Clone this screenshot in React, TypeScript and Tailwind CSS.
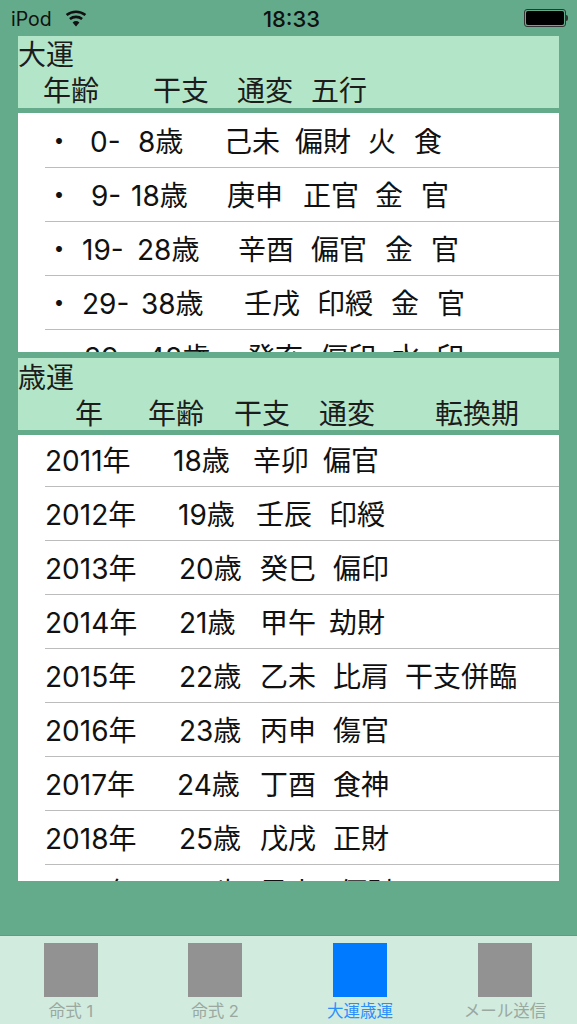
type Cell = { t: string; w: string };

const FONT = "font-['Inter','Noto_Sans_CJK_JP',sans-serif]";

const LUCK_ROWS: Cell[][] = [
  [{ t: '・', w: 'w-[45px]' }, { t: '0-', w: 'w-[48px]' }, { t: '8歳', w: 'w-[86px]' }, { t: '己未', w: 'w-[71px]' }, { t: '偏財', w: 'w-[73px]' }, { t: '火', w: 'w-[46px]' }, { t: '食', w: 'w-[40px]' }],
  [{ t: '・', w: 'w-[46px]' }, { t: '9-', w: 'w-[40px]' }, { t: '18歳', w: 'w-[96px]' }, { t: '庚申', w: 'w-[76px]' }, { t: '正官', w: 'w-[72px]' }, { t: '金', w: 'w-[46px]' }, { t: '官', w: 'w-[40px]' }],
  [{ t: '・', w: 'w-[37px]' }, { t: '19-', w: 'w-[55px]' }, { t: '28歳', w: 'w-[101px]' }, { t: '辛酉', w: 'w-[73px]' }, { t: '偏官', w: 'w-[74px]' }, { t: '金', w: 'w-[46px]' }, { t: '官', w: 'w-[40px]' }],
  [{ t: '・', w: 'w-[37px]' }, { t: '29-', w: 'w-[59px]' }, { t: '38歳', w: 'w-[103px]' }, { t: '壬戌', w: 'w-[73px]' }, { t: '印綬', w: 'w-[74px]' }, { t: '金', w: 'w-[46px]' }, { t: '官', w: 'w-[40px]' }],
  [{ t: '・', w: 'w-[39px]' }, { t: '39-', w: 'w-[63px]' }, { t: '48歳', w: 'w-[100px]' }, { t: '癸亥', w: 'w-[73px]' }, { t: '偏印', w: 'w-[72px]' }, { t: '水', w: 'w-[44px]' }, { t: '印', w: 'w-[40px]' }],
];

const YEAR_ROWS: Cell[][] = [
  [{ t: '2011年', w: 'w-[128px]' }, { t: '18歳', w: 'w-[80px]' }, { t: '辛卯', w: 'w-[70px]' }, { t: '偏官', w: 'w-[60px]' }],
  [{ t: '2012年', w: 'w-[133px]' }, { t: '19歳', w: 'w-[78px]' }, { t: '壬辰', w: 'w-[73px]' }, { t: '印綬', w: 'w-[60px]' }],
  [{ t: '2013年', w: 'w-[134px]' }, { t: '20歳', w: 'w-[81px]' }, { t: '癸巳', w: 'w-[73px]' }, { t: '偏印', w: 'w-[60px]' }],
  [{ t: '2014年', w: 'w-[134px]' }, { t: '21歳', w: 'w-[81px]' }, { t: '甲午', w: 'w-[69px]' }, { t: '劫財', w: 'w-[60px]' }],
  [{ t: '2015年', w: 'w-[134px]' }, { t: '22歳', w: 'w-[81px]' }, { t: '乙未', w: 'w-[73px]' }, { t: '比肩', w: 'w-[72px]' }, { t: '干支併臨', w: 'w-[115px]' }],
  [{ t: '2016年', w: 'w-[134px]' }, { t: '23歳', w: 'w-[81px]' }, { t: '丙申', w: 'w-[73px]' }, { t: '傷官', w: 'w-[60px]' }],
  [{ t: '2017年', w: 'w-[132px]' }, { t: '24歳', w: 'w-[83px]' }, { t: '丁酉', w: 'w-[73px]' }, { t: '食神', w: 'w-[60px]' }],
  [{ t: '2018年', w: 'w-[134px]' }, { t: '25歳', w: 'w-[81px]' }, { t: '戊戌', w: 'w-[73px]' }, { t: '正財', w: 'w-[60px]' }],
  [{ t: '2019年', w: 'w-[134px]' }, { t: '26歳', w: 'w-[81px]' }, { t: '己亥', w: 'w-[79px]' }, { t: '偏財', w: 'w-[60px]' }],
];

const TABS = [
  { label: '命式 1', box: 'bg-[#929292]', text: 'text-[#9aa8a0]', slot: 'w-[188px] pl-[44px]' },
  { label: '命式 2', box: 'bg-[#929292]', text: 'text-[#9aa8a0]', slot: 'w-[145px]' },
  { label: '大運歳運', box: 'bg-[#007aff]', text: 'text-[#2b8ffb]', slot: 'w-[145px]' },
  { label: 'メール送信', box: 'bg-[#929292]', text: 'text-[#9aa8a0]', slot: 'w-[99px]' },
];

function Row({ cells }: { cells: Cell[] }) {
  return (
    <div className="h-[54px] shrink-0 pl-[27px]">
      <div className="h-[53px] pt-[3px] flex items-center text-[28px] leading-[36px] text-[#111] whitespace-nowrap">
        {cells.map((c, i) => (
          <span key={i} className={`${c.w} shrink-0`}>{c.t}</span>
        ))}
      </div>
      <div className="h-px bg-[#bcbcbc]" />
    </div>
  );
}

function SectionHeader({ title, cols, pad }: { title: string; cols: Cell[]; pad: string }) {
  return (
    <div className={`h-[72px] mx-[18px] bg-[#b3e6c8] text-[28px] leading-[36px] text-[#1c1c1c] whitespace-nowrap ${pad}`}>
      <div>{title}</div>
      <div className="flex">
        {cols.map((c, i) => (
          <span key={i} className={`${c.w} shrink-0`}>{c.t}</span>
        ))}
      </div>
    </div>
  );
}

function WifiIcon() {
  return (
    <svg width="22" height="18" viewBox="0 0 22 18" className="text-[#111]">
      <path d="M11 17.5 L7.6 13.4 A5.4 5.4 0 0 1 14.4 13.4 Z" fill="currentColor" />
      <path d="M4.9 10.1 A9.6 9.6 0 0 1 17.1 10.1" fill="none" stroke="currentColor" strokeWidth="2.6" />
      <path d="M1.6 6.1 A14.8 14.8 0 0 1 20.4 6.1" fill="none" stroke="currentColor" strokeWidth="2.6" />
    </svg>
  );
}

export default function App() {
  return (
    <div className={`relative w-[577px] h-[1024px] bg-[#64ab8c] overflow-hidden flex flex-col ${FONT}`}>
      <div className="h-[36px] shrink-0 flex items-center pl-[11px] pr-[9px] text-[#111] text-[19.5px]">
        <span className="w-[54px] pt-[3px]">iPod</span>
        <WifiIcon />
        <div className="ml-auto flex items-center">
          <div className="w-[42px] h-[18px] rounded-[3px] border border-[#333] p-[1px]">
            <div className="w-full h-full rounded-[2px] bg-black" />
          </div>
          <div className="w-[2px] h-[6px] bg-[#333] rounded-r-sm" />
        </div>
      </div>
      <span className="absolute top-[6px] left-[3px] w-full text-center font-medium text-[22px] text-[#111] leading-[26px]">18:33</span>

      <SectionHeader
        title="大運"
        pad="pt-px"
        cols={[
          { t: '', w: 'w-[25px]' },
          { t: '年齢', w: 'w-[110px]' },
          { t: '干支', w: 'w-[84px]' },
          { t: '通変', w: 'w-[74px]' },
          { t: '五行', w: 'w-[60px]' },
        ]}
      />
      <div className="h-[239px] mt-[5px] mx-[18px] pt-px bg-white overflow-hidden">
        {LUCK_ROWS.map((r, i) => <Row key={i} cells={r} />)}
      </div>

      <div className="mt-[6px]">
        <SectionHeader
          title="歳運"
          pad="pt-[2px]"
          cols={[
            { t: '', w: 'w-[57px]' },
            { t: '年', w: 'w-[73px]' },
            { t: '年齢', w: 'w-[86px]' },
            { t: '干支', w: 'w-[85px]' },
            { t: '通変', w: 'w-[116px]' },
            { t: '転換期', w: 'w-[90px]' },
          ]}
        />
      </div>
      <div className="h-[446px] mt-[5px] mx-[18px] bg-white overflow-hidden">
        <div className="-mt-[2px]">
          {YEAR_ROWS.map((r, i) => <Row key={i} cells={r} />)}
        </div>
      </div>

      <div className="mt-auto h-[89px] shrink-0 bg-[#d1ebdf] border-t-[1px] border-[#5a9f80] flex pt-[7px]">
        {TABS.map((t) => (
          <div key={t.label} className={`${t.slot} shrink-0`}>
            <div className="w-[54px] flex flex-col items-center">
              <div className={`w-[54px] h-[54px] shrink-0 ${t.box}`} />
              <span className={`mt-[5px] text-[16.5px] leading-[18px] whitespace-nowrap ${t.text}`}>{t.label}</span>
            </div>
          </div>
        ))}
      </div>
    </div>
  );
}
